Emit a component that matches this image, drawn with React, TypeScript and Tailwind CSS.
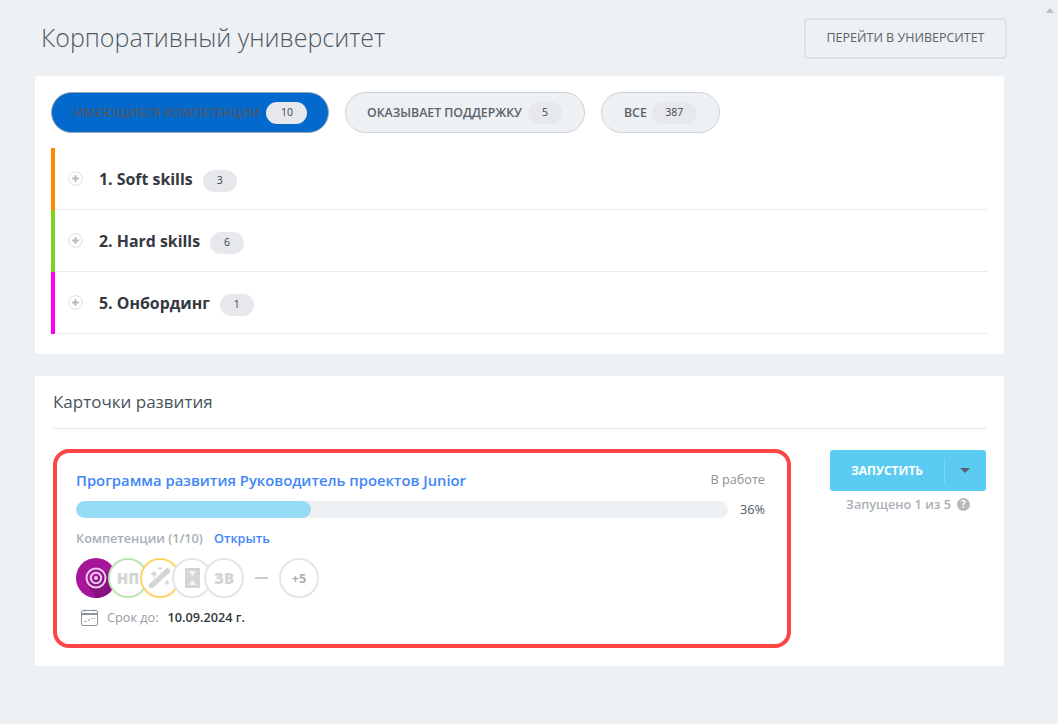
import React from "react";

const Count = ({ n, w = "w-[34px]", cls = "" }: { n: string; w?: string; cls?: string }) => (
  <span className={`flex h-[22px] ${w} items-center justify-center rounded-full bg-[#e6e8eb] text-[10.5px] text-[#3d4650] ${cls}`}>{n}</span>
);

const Row = ({ color, title, n }: { color: string; title: string; n: string }) => (
  <div className="flex h-[62px] border-b border-[#eaecee]">
    <div className={`-mb-px w-1 ${color}`} />
    <div className="flex flex-1 items-center pl-[13px]">
      <svg width="15" height="15" viewBox="0 0 15 15">
        <circle cx="7.5" cy="7.5" r="6.8" fill="#fff" stroke="#dcdfe3" strokeWidth="1" />
        <path d="M7.5 4.2v6.600M4.200 7.500h6.600" stroke="#b5bac0" strokeWidth="2" />
      </svg>
      <span className="ml-[16px] text-[15.9px] leading-5 font-bold text-[#33383e]">{title}</span>
      <Count n={n} cls="ml-[10px] mt-[4px]" />
    </div>
  </div>
);

const Circle = ({ border, children, cls = "" }: { border: string; children?: React.ReactNode; cls?: string }) => (
  <div className={`flex h-10 w-10 shrink-0 items-center justify-center rounded-full border-2 bg-white ${border} ${cls}`}>{children}</div>
);

export default function App() {
  return (
    <div className="relative h-[724px] w-[1058px] overflow-hidden bg-[#eef1f4] font-['Open_Sans','Noto_Sans',sans-serif]">
      <svg width="8" height="5" viewBox="0 0 8 5" className="absolute top-[8px] right-[4px]">
        <path d="M4 0l4 5H0z" fill="#b9bdc2" />
      </svg>
      <div className="w-[1007px] pl-[35px]">
        <div className="flex h-[76px] items-start justify-between">
          <h1 className="mt-[18px] ml-[6px] text-[25px] leading-[38px] font-light text-[#4d5a66]">Корпоративный университет</h1>
          <button className="mt-[18px] flex h-[41px] w-[203px] items-center justify-center rounded border-2 border-[#dde0e4] text-[12.5px] font-medium text-[#5a626a]">
            ПЕРЕЙТИ В УНИВЕРСИТЕТ
          </button>
        </div>

        <section className="h-[278px] w-[969px] rounded-[3px] bg-white pt-4 pr-4 pl-4">
          <div className="flex gap-4">
            <div className="flex h-[41px] w-[278px] items-center rounded-full border border-[#9aa7b5] bg-[#0469cc] pl-[22px]">
              <span className="mt-[1px] text-[12.3px] font-semibold text-[#4a5a6c]">ИМЕЮЩИЕСЯ КОМПЕТЕНЦИИ</span>
              <Count n="10" w="w-[41px]" cls="ml-[6px]" />
            </div>
            <div className="flex h-[41px] w-[240px] items-center rounded-full border border-[#ccd2d9] bg-[#eef1f4] pl-[21px]">
              <span className="mt-[1px] text-[12.3px] font-semibold text-[#5a626a]">ОКАЗЫВАЕТ ПОДДЕРЖКУ</span>
              <Count n="5" cls="ml-[6px]" w="w-[34px]" />
            </div>
            <div className="flex h-[41px] w-[119px] items-center rounded-full border border-[#ccd2d9] bg-[#eef1f4] pl-[22px]">
              <span className="mt-[1px] text-[12.3px] font-semibold text-[#5a626a]">ВСЕ</span>
              <Count n="387" w="w-[45px]" cls="ml-[5px]" />
            </div>
          </div>
          <div className="mt-[15px] w-[937px]">
            <Row color="bg-[#ff8a00]" title="1. Soft skills" n="3" />
            <Row color="bg-[#7ed321]" title="2. Hard skills" n="6" />
            <Row color="bg-[#ff00ee]" title="5. Онбординг" n="1" />
          </div>
        </section>

        <section className="mt-[22px] h-[290px] w-[969px] bg-white pt-[14px] pr-[18px] pl-[18px]">
          <h2 className="h-[39px] border-b border-[#e3e5e8] text-[17px] leading-6 text-[#47525d]">Карточки развития</h2>
          <div className="flex">
            <div className="mt-5 h-[199px] w-[738px] rounded-[16px] border-4 border-[#ff4444] pt-[17px] pr-[22px] pl-[19px]">
              <div className="flex items-center justify-between">
                <span className="text-[14.8px] leading-5 font-semibold text-[#3f87f5]">Программа развития Руководитель проектов Junior</span>
                <span className="text-[12.7px] text-[#8b939b]">В работе</span>
              </div>
              <div className="mt-[10px] flex items-center">
                <div className="h-[17px] w-[652px] overflow-hidden rounded-full bg-[#eef1f4]">
                  <div className="h-full w-[36%] rounded-full bg-[#96dcf6]" />
                </div>
                <span className="ml-auto text-[12.7px] text-[#4d5a66]">36%</span>
              </div>
              <div className="mt-[10px] flex items-center text-[12.7px] leading-[18px] font-semibold">
                <span className="text-[#a9afb5]">Компетенции (1/10)</span>
                <span className="ml-[11px] text-[#3f87f5]">Открыть</span>
              </div>
              <div className="mt-[11px] flex items-center">
                <div className="relative z-10 flex h-10 w-10 shrink-0 items-center justify-center overflow-hidden rounded-full bg-[#a5169b]">
                  <svg width="40" height="40" viewBox="0 0 40 40" className="absolute inset-0">
                    <path d="M40 20a20 20 0 0 1-20 20L11 27 29 13z" fill="#8b1183" />
                    <circle cx="20" cy="20" r="9.500" fill="none" stroke="#efc9ec" strokeWidth="2" />
                    <circle cx="20" cy="20" r="5.200" fill="none" stroke="#efc9ec" strokeWidth="2" />
                    <circle cx="20" cy="20" r="2" fill="#efc9ec" />
                  </svg>
                </div>
                <Circle border="border-[#bde5b3]" cls="z-20 -ml-2 text-[15px] font-extrabold text-[#d3d6d9]">НП</Circle>
                <Circle border="border-[#fcd469]" cls="z-30 -ml-2">
                  <svg width="26" height="26" viewBox="0 0 26 26" fill="#d3d6d9">
                    <path d="M4.500 20.500L20.500 6" stroke="#d3d6d9" strokeWidth="5.500" strokeLinecap="round" />
                    <path d="M7 5l1.300 2.700L11 9 8.300 10.300 7 13l-1.300-2.700L3 9l2.700-1.300zM13 1l.8 1.700 1.700.8-1.700.8L13 6l-.8-1.700-1.700-.8 1.700-.8zM20 14.500l1 2 2 1-2 1-1 2-1-2-2-1 2-1z" />
                  </svg>
                </Circle>
                <Circle border="border-[#e3e5e8]" cls="z-40 -ml-2">
                  <svg width="15" height="20" viewBox="0 0 15 20">
                    <rect width="15" height="20" fill="#d3d6d9" />
                    <path d="M3 3h9L8.500 10 12 17H3l3.500-7z" fill="#f4f5f6" />
                    <path d="M3.500 3.500l8 13M11.500 3.500l-8 13" stroke="#d3d6d9" strokeWidth="1.500" />
                  </svg>
                </Circle>
                <Circle border="border-[#e3e5e8]" cls="z-50 -ml-2 text-[15px] font-extrabold text-[#d3d6d9]">ЗВ</Circle>
                <span className="mx-[11px] h-[2px] w-[13px] bg-[#c8ccd0]" />
                <Circle border="border-[#e3e5e8]" cls="text-[12.700px] font-bold text-[#a9afb5]">+5</Circle>
              </div>
              <div className="mt-[10px] ml-[5px] flex items-center text-[12.700px] leading-[18px]">
                <svg width="17" height="17" viewBox="0 0 17 17" fill="none">
                  <rect x=".5" y="1.500" width="16" height="15" rx="1.500" stroke="#8b939b" />
                  <path d="M.5 5h16" stroke="#8b939b" strokeWidth="2" />
                  <path d="M4 .5v2M13 .5v2" stroke="#8b939b" />
                  <path d="M3.500 12.500h2M7 11h2M10 9.500h1.500M13 9.500h1" stroke="#8b939b" />
                </svg>
                <span className="ml-[9px] text-[#969da4]">Срок до:</span>
                <span className="ml-[9px] font-semibold text-[#33383e]">10.09.2024 г.</span>
              </div>
            </div>

            <div className="mt-[21px] ml-[39px] w-[156px]">
              <div className="flex h-[41px] items-center rounded-[3px] bg-[#5bcbf1] text-white">
                <span className="w-[114px] text-center text-[12px] font-bold">ЗАПУСТИТЬ</span>
                <span className="h-[25px] w-px bg-[#7bd6f4]" />
                <svg width="10" height="5" viewBox="0 0 10 5" className="ml-[15px]">
                  <path d="M0 0h10L5 5z" fill="#50626f" />
                </svg>
              </div>
              <div className="mt-[4px] flex items-center justify-center text-[12.700px] leading-[18px] font-semibold text-[#a9afb5]">
                Запущено 1 из 5
                <span className="ml-[6px] flex h-[13px] w-[13px] items-center justify-center rounded-full bg-[#b5b9bd] text-[10px] font-bold text-white">?</span>
              </div>
            </div>
          </div>
        </section>
      </div>
    </div>
  );
}
